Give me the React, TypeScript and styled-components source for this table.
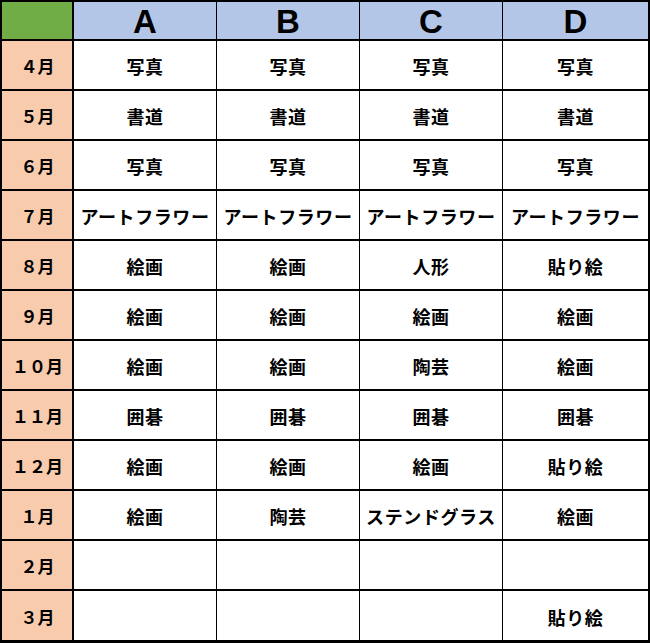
import React from 'react';
import styled, { createGlobalStyle } from 'styled-components';

/* -------------------------------------------------------------------------- */
/*                                    Data                                    */
/* -------------------------------------------------------------------------- */

const columns = ['A', 'B', 'C', 'D'];

const schedule: { month: string; items: string[] }[] = [
  { month: '４月', items: ['写真', '写真', '写真', '写真'] },
  { month: '５月', items: ['書道', '書道', '書道', '書道'] },
  { month: '６月', items: ['写真', '写真', '写真', '写真'] },
  { month: '７月', items: ['アートフラワー', 'アートフラワー', 'アートフラワー', 'アートフラワー'] },
  { month: '８月', items: ['絵画', '絵画', '人形', '貼り絵'] },
  { month: '９月', items: ['絵画', '絵画', '絵画', '絵画'] },
  { month: '１０月', items: ['絵画', '絵画', '陶芸', '絵画'] },
  { month: '１１月', items: ['囲碁', '囲碁', '囲碁', '囲碁'] },
  { month: '１２月', items: ['絵画', '絵画', '絵画', '貼り絵'] },
  { month: '１月', items: ['絵画', '陶芸', 'ステンドグラス', '絵画'] },
  { month: '２月', items: ['', '', '', ''] },
  { month: '３月', items: ['', '', '', '貼り絵'] },
];

/* -------------------------------------------------------------------------- */
/*                                  Component                                 */
/* -------------------------------------------------------------------------- */

const App = () => (
  <>
    <GlobalStyle />
    <Sheet>
      <CornerCell />
      {columns.map((c) => (
        <HeaderCell key={c}>{c}</HeaderCell>
      ))}
      {schedule.map((row) => (
        <React.Fragment key={row.month}>
          <MonthCell>{row.month}</MonthCell>
          {row.items.map((item, i) => (
            <Cell key={i}>{item}</Cell>
          ))}
        </React.Fragment>
      ))}
    </Sheet>
  </>
);

/* -------------------------------------------------------------------------- */
/*                                    STYLES                                  */
/* -------------------------------------------------------------------------- */

const GlobalStyle = createGlobalStyle`
  html, body {
    margin: 0;
    padding: 0;
    background: #fff;
  }
`;

const Sheet = styled.div`
  display: grid;
  grid-template-columns: 71px 142px 142px 142px 145px;
  grid-template-rows: 37px repeat(11, 48px) 49px;
  column-gap: 1px;
  row-gap: 2px;
  width: 650px;
  box-sizing: border-box;
  padding: 2px 2px 3px 2px;
  background: #000;
  font-family: 'Noto Sans CJK JP', 'Noto Sans', sans-serif;
  font-weight: 700;
  color: #000;
`;

const BaseCell = styled.div`
  display: flex;
  align-items: center;
  justify-content: center;
  white-space: nowrap;
  overflow: hidden;
`;

const CornerCell = styled(BaseCell)`
  background: #70ad47;
  margin-right: 1px;
`;

const HeaderCell = styled(BaseCell)`
  background: #b4c6e7;
  font-family: 'Liberation Sans', Arial, sans-serif;
  font-size: 33px;
  padding-top: 3px;
`;

const MonthCell = styled(BaseCell)`
  background: #f8cbad;
  margin-right: 1px;
  font-size: 17px;
  padding-left: 1px;
  padding-top: 1px;
`;

const Cell = styled(BaseCell)`
  background: #fff;
  font-size: 18px;
  letter-spacing: 0.6px;
  padding-top: 2px;
`;

export default App;
